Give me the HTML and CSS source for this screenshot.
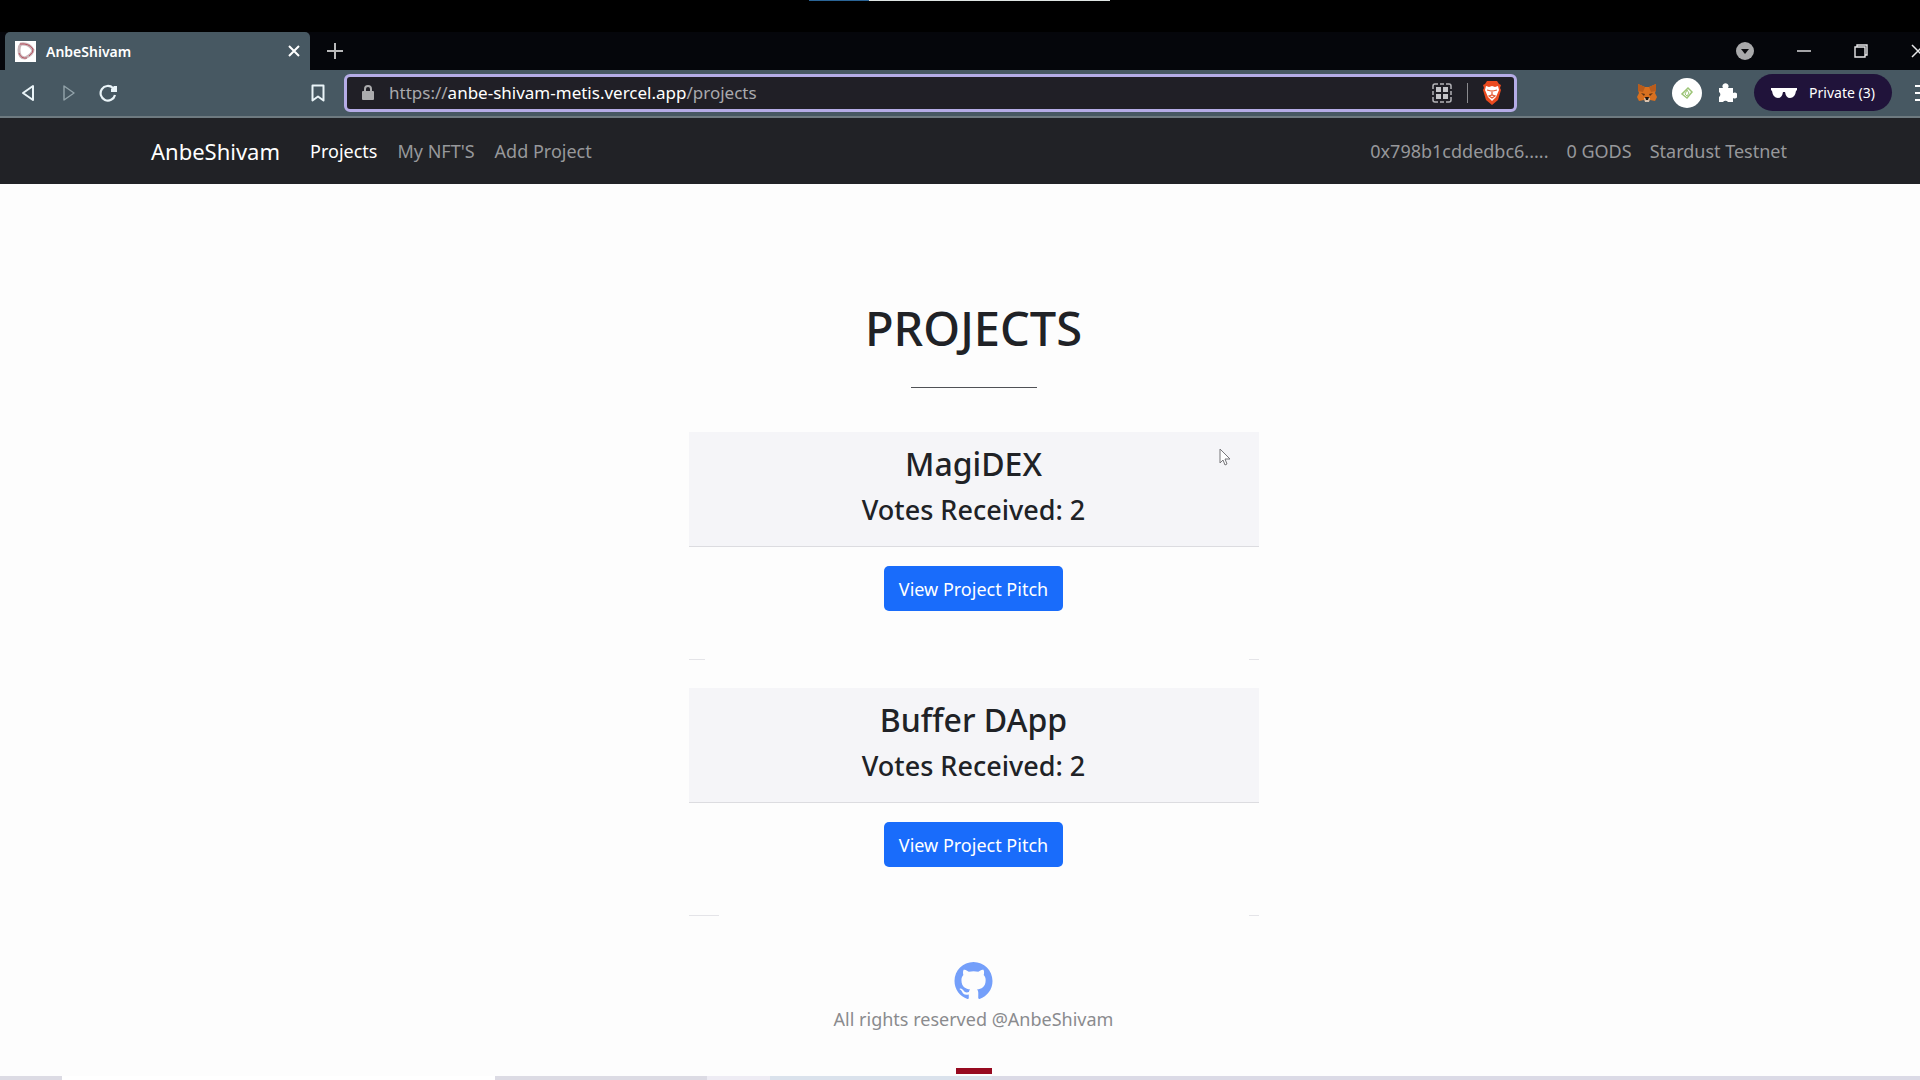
FILE: index.html
```
<!DOCTYPE html>
<html lang="en">
<head>
    <meta charset="UTF-8">
    <meta name="viewport" content="width=device-width, initial-scale=1.0">
    <title>AnbeShivam</title>
    <link rel="stylesheet" href="styles.css">
</head>
<body>
    <div class="desktop">
        <div class="screen-edge"></div>

        <!-- tab strip -->
        <div class="tab-strip">
            <div class="tab">
                <svg class="favicon" viewBox="0 0 21 21">
                    <rect width="21" height="21" fill="#fff"/>
                    <path d="M6 3q8-1 12 6 0 4-8 8-6 0-6-8 0-4 2-6z" fill="none" stroke="#c9b4b8" stroke-width="3"/>
                    <path d="M5 3q9-1 13 5 1 3-4 7M4 12q2 6 8 5" fill="none" stroke="#b8505f" stroke-width="1"/>
                    <path d="M8 7v7l6-4z" fill="#fff"/>
                </svg>
                <span class="tab-title">AnbeShivam</span>
                <button type="button" class="tab-close" aria-label="Close tab">
                    <svg width="12" height="12" viewBox="0 0 12 12"><path d="M1 1l10 10M11 1L1 11" stroke="#fff" stroke-width="2"/></svg>
                </button>
            </div>
            <button type="button" class="new-tab" aria-label="New tab">
                <svg width="16" height="16" viewBox="0 0 16 16"><path d="M8 0v16M0 8h16" stroke="#b9b9bb" stroke-width="2"/></svg>
            </button>
            <div class="window-buttons">
                <button type="button" aria-label="Search tabs">
                    <svg width="18" height="18" viewBox="0 0 18 18"><circle cx="9" cy="9" r="9" fill="#a9a9ab"/><path d="M5 7h8l-4 5z" fill="#0a0a0e"/></svg>
                </button>
                <button type="button" aria-label="Minimize">
                    <svg width="14" height="14" viewBox="0 0 14 14"><path d="M0 7h14" stroke="#e8e8ea" stroke-width="1.4"/></svg>
                </button>
                <button type="button" aria-label="Restore">
                    <svg width="14" height="14" viewBox="0 0 14 14"><path d="M1 3h10v10H1zM3 3V1h10v10h-2" fill="none" stroke="#e8e8ea" stroke-width="1.4"/></svg>
                </button>
                <button type="button" aria-label="Close window">
                    <svg width="14" height="14" viewBox="0 0 14 14"><path d="M1 1l12 12M13 1L1 13" stroke="#e8e8ea" stroke-width="1.5"/></svg>
                </button>
            </div>
        </div>

        <!-- address bar -->
        <div class="toolbar">
            <div class="toolbar-nav">
                <button type="button" aria-label="Back">
                    <svg width="18" height="18" viewBox="0 0 18 18"><path d="M14 2v14L4 9z" fill="none" stroke="#eaf4f8" stroke-width="2" stroke-linejoin="round"/></svg>
                </button>
                <button type="button" aria-label="Forward">
                    <svg width="18" height="18" viewBox="0 0 18 18"><path d="M5 2v14l10-7z" fill="none" stroke="#93a3aa" stroke-width="1.4" stroke-linejoin="round"/></svg>
                </button>
                <button type="button" aria-label="Reload">
                    <svg width="18" height="18" viewBox="0 0 18 18"><path d="M14 4A7.300 7.300 0 1 0 16 11" fill="none" stroke="#eaf4f8" stroke-width="2.200"/><path d="M18 2v6h-6V5l3-3z" fill="#eaf4f8"/></svg>
                </button>
            </div>
            <button type="button" class="bookmark" aria-label="Bookmark">
                <svg width="14" height="18" viewBox="0 0 14 18"><path d="M1.500 1.500h11v15L7 12.500l-5.500 4z" fill="none" stroke="#eaf4f8" stroke-width="2" stroke-linejoin="round"/></svg>
            </button>
            <div class="address">
                <svg width="12" height="15" viewBox="0 0 12 15"><rect y="6" width="12" height="9" rx="1" fill="#ababad"/><path d="M3 7V4a3 3 0 0 1 6 0v3" fill="none" stroke="#ababad" stroke-width="2"/></svg>
                <span class="url">https://<b>anbe-shivam-metis.vercel.app</b>/projects</span>
                <svg width="20" height="20" viewBox="0 0 20 20">
                    <path d="M1 6V3q0-2 2-2h3M8 1h4M14 1h3q2 0 2 2v3M19 8v4M19 14v3q0 2-2 2h-3M12 19H8M6 19H3q-2 0-2-2v-3M1 12V8" fill="none" stroke="#b4b4b8" stroke-width="1.500"/>
                    <path d="M4 4h5v5H4zM11 4h5v5h-5zM4 11h5v5H4zM11 11h5v5h-5z" fill="#c4c4c8"/>
                </svg>
                <span class="divider"></span>
                <svg width="20" height="24" viewBox="0 0 20 24">
                    <path d="M5 0h10l2 3 2 1-1 3 1 2-3 10-6 5-6-5L1 9l1-2-1-3 2-1z" fill="#ea4a1f"/>
                    <path d="M4 5l3 1 3-1 3 1 3-1 1 4-3 7-4 4-4-4-3-7z" fill="#fff"/>
                    <path d="M5 9l4 1M15 9l-4 1M10 9v5M7 15l3-1 3 1-3 2z" fill="none" stroke="#e4572f" stroke-width="1.200"/>
                </svg>
            </div>
            <div class="extensions">
                <svg width="20" height="18" viewBox="0 0 20 18">
                    <path d="M1 0l7 3h4l7-3v6l-1 3 2 4-2 4-5-1-2 2H9l-2-2-5 1-2-4 2-4-1-3z" fill="#d9701f"/>
                    <path d="M1 0l7 3-2 5-5-1zM19 0l-7 3 2 5 5-1z" fill="#b95c1c"/>
                    <path d="M4 9l4 1-1 2zM16 9l-4 1 1 2z" fill="#5a3216"/>
                    <path d="M7 14h6l-1 4H8z" fill="#d8c3b0"/>
                    <path d="M8 13h4l-1 3H9z" fill="#1d1512"/>
                </svg>
                <svg width="30" height="30" viewBox="0 0 30 30">
                    <circle cx="15" cy="15" r="15" fill="#fff"/>
                    <path d="M16 10l4 4-5 6-5-4z" fill="none" stroke="#9cc476" stroke-width="1.500"/>
                    <path d="M15 12l2 3-2 3-2-2z" fill="none" stroke="#9cc476"/>
                </svg>
                <svg width="20" height="20" viewBox="0 0 20 20"><path d="M2 5h4a3 3 0 1 1 5 0h5v5a3 3 0 1 1 0 5v4h-5a3 3 0 0 0-5 0H2v-5a3 3 0 0 0 0-5z" fill="#fff"/></svg>
            </div>
            <button type="button" class="private">
                <svg width="26" height="10" viewBox="0 0 26 10"><path d="M0 0h26v2l-1 1q-1 7-6 7-4 0-5-6h-2q-1 6-5 6-5 0-6-7L0 2z" fill="#fff"/></svg>
                Private (3)
            </button>
            <button type="button" class="menu" aria-label="Menu">
                <svg width="18" height="18" viewBox="0 0 18 18"><path d="M0 2h18M0 9h18M0 16h18" stroke="#fff" stroke-width="2"/></svg>
            </button>
        </div>

        <nav class="navbar">
            <a class="brand" href="#">AnbeShivam</a>
            <div class="nav-links">
                <a class="active" href="#">Projects</a>
                <a href="#">My NFT'S</a>
                <a href="#">Add Project</a>
            </div>
            <div class="nav-links account">
                <a href="#">0x798b1cddedbc6.....</a>
                <a href="#">0 GODS</a>
                <a href="#">Stardust Testnet</a>
            </div>
        </nav>

        <main>
            <h1>PROJECTS</h1>
            <hr>
            <section class="card">
                <div class="card-header">
                    <h2>MagiDEX</h2>
                    <h3>Votes Received: 2</h3>
                    <svg class="cursor" width="12" height="18" viewBox="0 0 12 18"><path d="M1 1v14l3-3 2 5 2-1-2-5h5z" fill="#fff" stroke="#77777b"/></svg>
                </div>
                <div class="card-body">
                    <button type="button" class="btn">View Project Pitch</button>
                </div>
            </section>
            <section class="card">
                <div class="card-header">
                    <h2>Buffer DApp</h2>
                    <h3>Votes Received: 2</h3>
                </div>
                <div class="card-body">
                    <button type="button" class="btn">View Project Pitch</button>
                </div>
            </section>
        </main>

        <footer>
            <a href="#" aria-label="GitHub">
                <svg width="39" height="38" viewBox="0 0 16 16"><path fill="#749ffa" d="M8 0C3.580 0 0 3.580 0 8c0 3.540 2.290 6.530 5.470 7.590.4.070.55-.17.55-.38 0-.19-.01-.82-.01-1.490-2.010.37-2.530-.49-2.690-.94-.09-.23-.48-.94-.82-1.130-.28-.15-.68-.52-.01-.53.63-.01 1.080.58 1.230.82.72 1.210 1.870.87 2.330.66.07-.52.28-.87.51-1.070-1.780-.2-3.640-.89-3.640-3.950 0-.87.31-1.590.82-2.150-.08-.2-.36-1.020.08-2.120 0 0 .67-.21 2.200.82.64-.18 1.320-.27 2-.27s1.360.09 2 .27c1.530-1.040 2.200-.82 2.200-.82.44 1.100.16 1.920.08 2.120.51.56.82 1.270.82 2.150 0 3.070-1.870 3.750-3.650 3.950.29.25.54.73.54 1.480 0 1.070-.01 1.930-.01 2.200 0 .21.15.46.55.38A8 8 0 0 0 16 8c0-4.420-3.580-8-8-8z"/></svg>
            </a>
            <p>All rights reserved @AnbeShivam</p>
            <span class="red-mark"></span>
        </footer>
    </div>
    <div class="taskbar"></div>
</body>
</html>
```
FILE: styles.css
```
* {
    box-sizing: border-box;
}
body {
    margin: 0;
    height: 100vh;
    overflow: hidden;
    display: flex;
    flex-direction: column;
    background-color: #fdfdfd;
    color: #202226;
    font-family: 'Noto Sans', 'Open Sans', sans-serif;
    font-size: 18px;
}
button {
    display: flex;
    align-items: center;
    justify-content: center;
    padding: 0;
    border: none;
    background: none;
    color: white;
    font-family: inherit;
}
svg {
    display: block;
    flex: none;
}
a {
    color: inherit;
    text-decoration: none;
}
/* the window runs a little past the right edge of the screen */
.desktop {
    width: calc(100% + 27px);
    flex: 1;
    min-height: 0;
}
.screen-edge {
    height: 32px;
    background: linear-gradient(to right, transparent 809px, #2a6496 809px, #2a6496 869px, #dfe5e3 869px, #dfe5e3 1110px, transparent 1110px) top / 100% 1px no-repeat #000;
}

/* browser */
.tab-strip {
    display: flex;
    align-items: center;
    height: 38px;
    padding-left: 5px;
    background-color: #05060b;
}
.tab {
    display: flex;
    align-items: center;
    gap: 10px;
    width: 305px;
    height: 100%;
    padding: 0 10px;
    border-radius: 5px 5px 0 0;
    background-color: #475862;
    color: white;
}
.favicon {
    width: 21px;
    height: 21px;
}
.tab-title {
    flex: 1;
    font-size: 14px;
    font-weight: 600;
}
.new-tab {
    margin-left: 17px;
}
.window-buttons {
    display: flex;
    align-items: center;
    gap: 43px;
    margin-left: auto;
    padding-right: 22px;
}
.toolbar {
    display: flex;
    align-items: center;
    height: 48px;
    padding: 0 14px 1px 19px;
    border-bottom: 2px solid #6e7a80;
    background-color: #475862;
}
.toolbar-nav {
    display: flex;
    gap: 22px;
}
.bookmark {
    margin-left: 194px;
}
.address {
    display: flex;
    align-items: center;
    flex: 1;
    height: 38px;
    margin-left: 19px;
    padding: 0 12px 0 15px;
    border: 3px solid #b5ace6;
    border-radius: 6px;
    background-color: #201f26;
}
.url {
    flex: 1;
    margin-left: 15px;
    color: #a9a9ad;
    font-size: 17px;
}
.url b {
    color: white;
    font-weight: 400;
}
.divider {
    width: 1px;
    height: 20px;
    margin: 0 14px 0 15px;
    background-color: #8a8a8e;
}
.extensions {
    display: flex;
    align-items: center;
    gap: 15px;
    margin-left: 120px;
}
.private {
    gap: 12px;
    height: 37px;
    width: 138px;
    margin-left: 17px;
    border-radius: 19px;
    background-color: #20133a;
    font-size: 14px;
}
.menu {
    margin-left: 23px;
}

/* page */
.navbar {
    display: flex;
    align-items: center;
    height: 66px;
    padding: 0 160px 0 151px;
    background-color: #212226;
    color: white;
}
.brand {
    font-size: 22px;
}
.nav-links {
    display: flex;
    gap: 20px;
    margin-left: 30px;
    color: #97989b;
}
.nav-links .active {
    color: white;
}
.account {
    gap: 18px;
    margin-left: auto;
}
main {
    display: flex;
    flex-direction: column;
    align-items: center;
    padding-top: 116px;
    text-align: center;
}
h1 {
    margin: 0;
    font-size: 47px;
    font-weight: 500;
    line-height: 56px;
}
hr {
    width: 126px;
    height: 1px;
    margin: 31px 0 44px;
    border: none;
    background-color: #505256;
}
.card {
    width: 570px;
    height: 228px;
    margin-bottom: 28px;
    background: linear-gradient(#e4e4e8, #e4e4e8) left bottom / 16px 1px no-repeat, linear-gradient(#e4e4e8, #e4e4e8) right bottom / 10px 1px no-repeat;
}
.card:last-child {
    background-size: 30px 1px, 10px 1px;
}
.card-header {
    position: relative;
    height: 115px;
    padding-top: 12px;
    border-bottom: 1px solid #dcdce0;
    background-color: #f5f5f8;
}
h2 {
    margin: 0 0 9px;
    font-size: 32px;
    font-weight: 500;
    line-height: 40px;
}
h3 {
    margin: 0;
    font-size: 27px;
    font-weight: 500;
    line-height: 34px;
}
.cursor {
    position: absolute;
    top: 16px;
    right: 28px;
}
.card-body {
    display: flex;
    justify-content: center;
    padding-top: 19px;
}
.btn {
    height: 45px;
    padding: 0 15px;
    border-radius: 5px;
    background-color: #196cfb;
    font-size: 18px;
}
footer {
    display: flex;
    flex-direction: column;
    align-items: center;
    padding-top: 18px;
    color: #8a8b8e;
}
footer p {
    margin: 5px 0 35px;
    line-height: 28px;
}
.red-mark {
    width: 36px;
    height: 6px;
    background-color: #970a20;
}
.taskbar {
    height: 4px;
    background: linear-gradient(to right, #dcdbe4 62px, #fff 62px, #fff 495px, #dcdbe4 495px, #dcdbe4 707px, #eeecf4 707px, #eeecf4 770px, #dae2ec 770px, #dae2ec 992px, #dbdae6 992px);
}
```
